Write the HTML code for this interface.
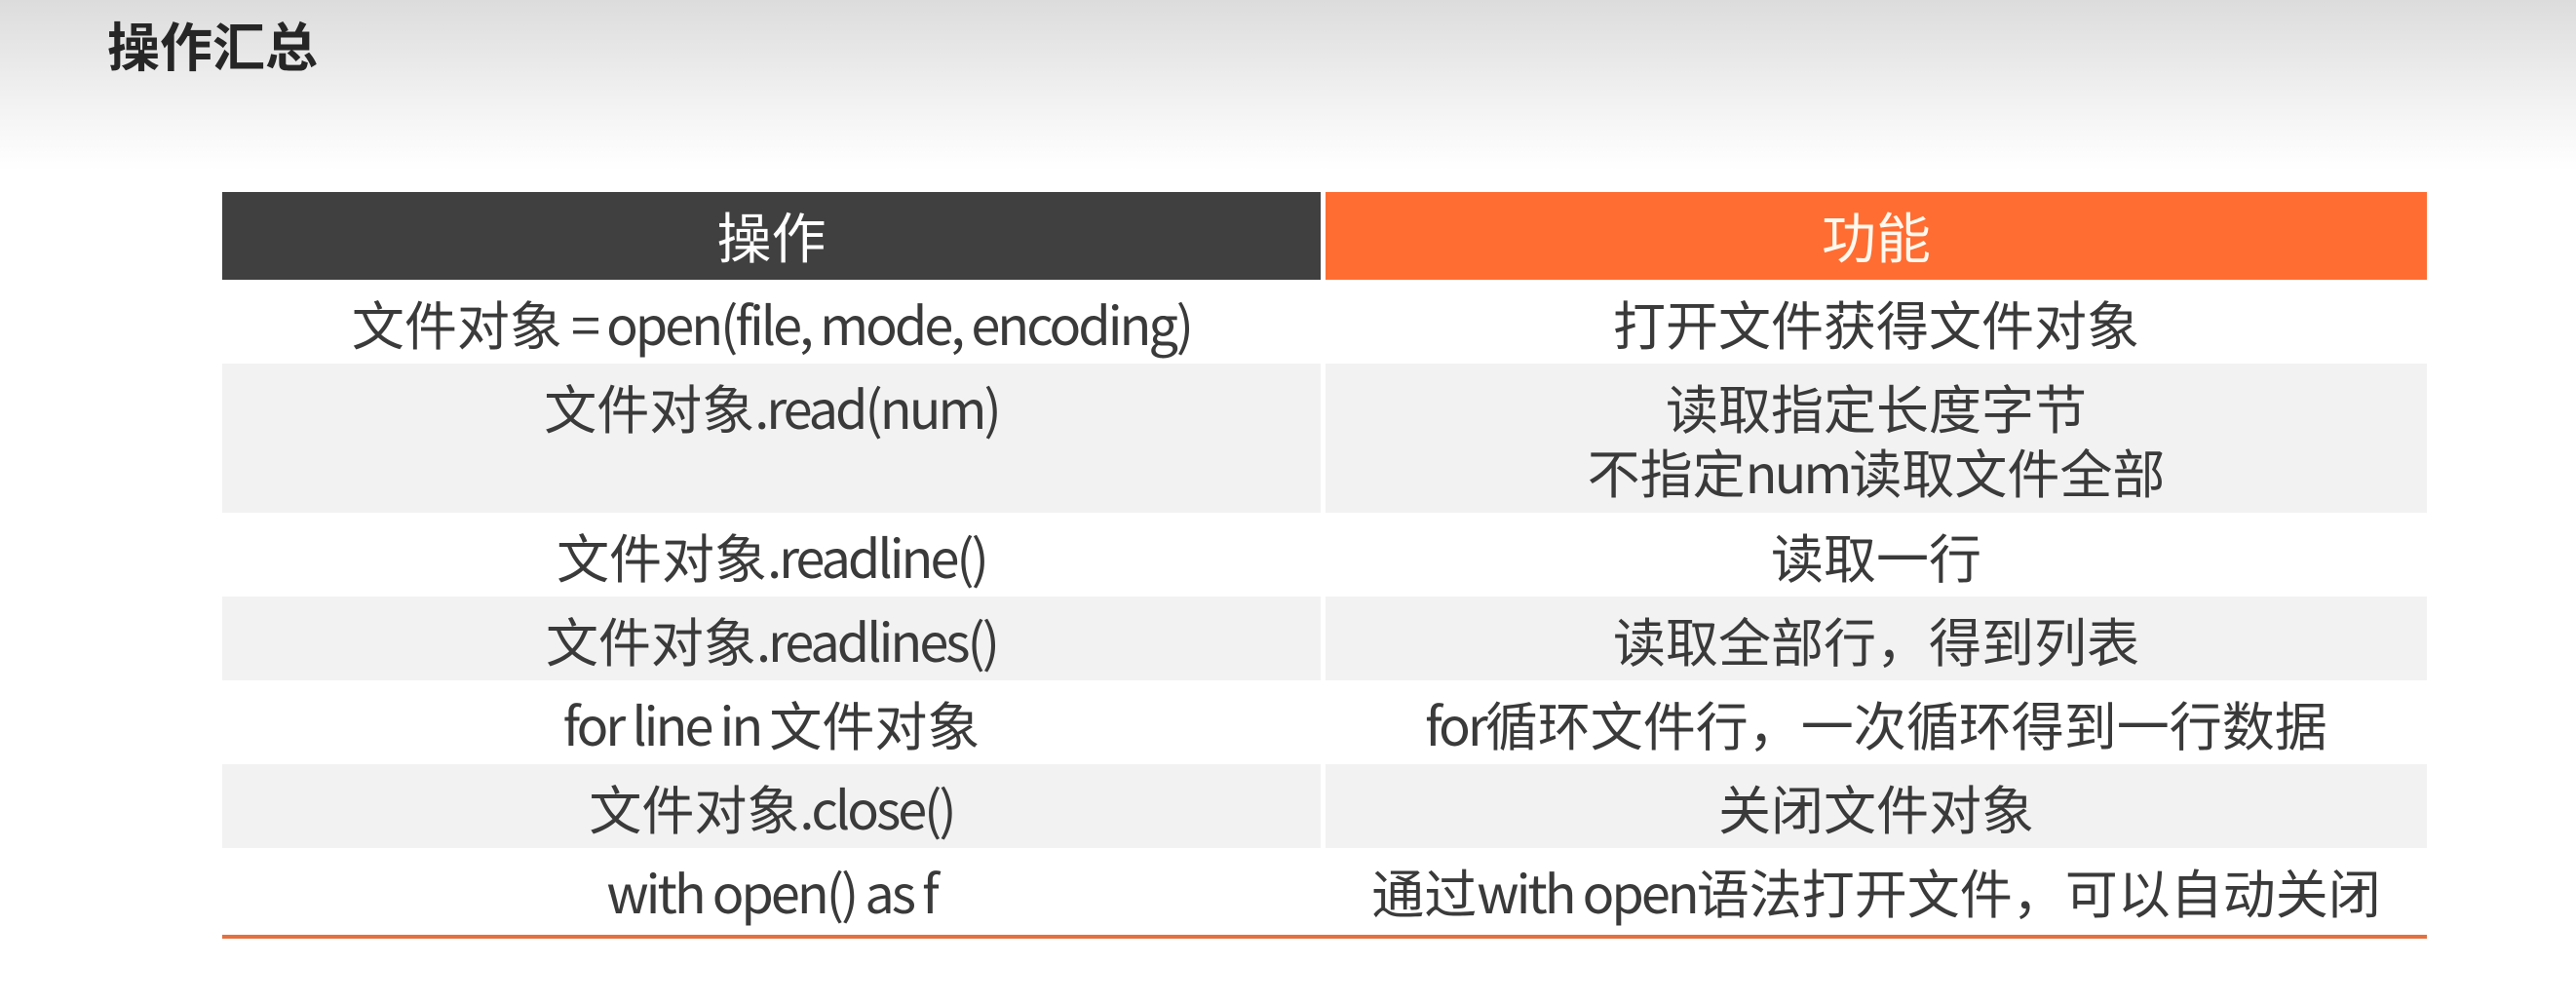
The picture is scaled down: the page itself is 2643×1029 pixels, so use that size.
<!DOCTYPE html>
<html><head><meta charset="utf-8"><style>
html,body{margin:0;padding:0;}
body{width:2643px;height:1029px;overflow:hidden;position:relative;
background:linear-gradient(to bottom,#dcdcdc 0px,#f3f3f3 110px,#ffffff 175px,#ffffff 100%);
font-family:"Noto Sans CJK SC","Liberation Sans",sans-serif;color:#3a3a3a;}
.title{position:absolute;left:110px;top:12px;font-size:54px;font-weight:bold;color:#262626;line-height:66px;}
.tbl{position:absolute;left:228px;top:197px;width:2262px;}
.row{display:flex;}
.c{box-sizing:border-box;text-align:center;font-size:54px;line-height:66px;padding:11px 0 9px;letter-spacing:0px;white-space:nowrap;}
.n{letter-spacing:-3px;}
.l{width:1127px;margin-right:5px;}
.r{width:1130px;}
.hd .c{height:90px;padding:0;line-height:90px;color:#fff;font-size:56px;}
.hd .l{background:#404040;}
.hd .r{background:#ff6d32;color:#fff8ee;}
.g .c{background:#f2f2f2;}
.line{position:absolute;left:228px;top:959px;width:2262px;height:4px;background:#e4703f;}
</style></head><body>
<div class="title">操作汇总</div>
<div class="tbl">
<div class="row hd"><div class="c l">操作</div><div class="c r">功能</div></div>
<div class="row" style="height:86px"><div class="c l">文件对象<span class="n"> = open(file, mode, encoding)</span></div><div class="c r">打开文件获得文件对象</div></div>
<div class="row g" style="height:153px"><div class="c l">文件对象<span class="n">.read(num)</span></div><div class="c r">读取指定长度字节<br>不指定<span class="n">num</span>读取文件全部</div></div>
<div class="row" style="height:86px"><div class="c l">文件对象<span class="n">.readline()</span></div><div class="c r">读取一行</div></div>
<div class="row g" style="height:86px"><div class="c l">文件对象<span class="n">.readlines()</span></div><div class="c r">读取全部行，得到列表</div></div>
<div class="row" style="height:86px"><div class="c l"><span class="n">for line in </span>文件对象</div><div class="c r"><span class="n">for</span>循环文件行，一次循环得到一行数据</div></div>
<div class="row g" style="height:86px"><div class="c l">文件对象<span class="n">.close()</span></div><div class="c r">关闭文件对象</div></div>
<div class="row" style="height:88px"><div class="c l"><span class="n">with open() as f</span></div><div class="c r">通过<span class="n">with open</span>语法打开文件，可以自动关闭</div></div>
</div>
<div class="line"></div>
</body></html>
